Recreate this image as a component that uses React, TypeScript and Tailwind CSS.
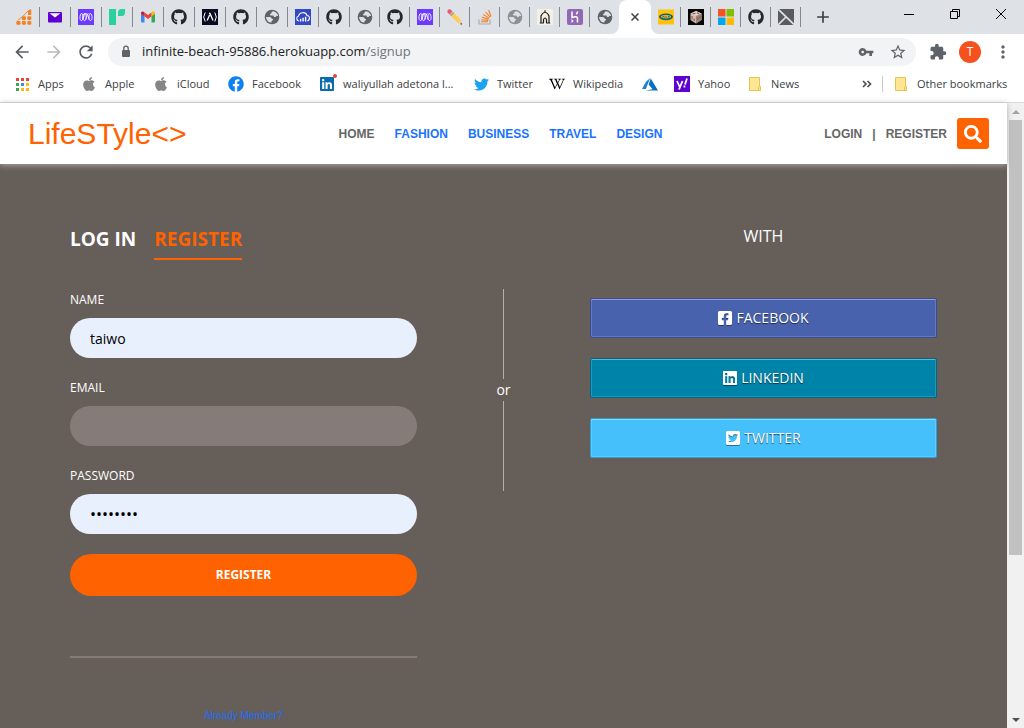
import React from "react";
import {
  FaApple,
  FaFacebook,
  FaFacebookSquare,
  FaGithub,
  FaLinkedin,
  FaSearch,
  FaTwitter,
  FaTwitterSquare,
  FaWikipediaW,
} from "react-icons/fa";
import {
  MdAdd,
  MdArrowBack,
  MdArrowForward,
  MdExtension,
  MdMoreVert,
  MdRefresh,
  MdStarBorder,
  MdVpnKey,
} from "react-icons/md";

type IconName =
  | "analytics" | "mail" | "meta" | "flag" | "gmail" | "github" | "camp" | "globe" | "cloud"
  | "pencil" | "stack" | "globeLight" | "arch" | "heroku" | "mtn" | "cube" | "windows" | "cross";

function Favicon({ name }: { name: IconName }) {
  if (name === "github") return <FaGithub className="size-4 text-[#24292e]" />;
  return (
    <svg viewBox="0 0 16 16" className="size-4 shrink-0" aria-hidden="true">
      {art[name]}
    </svg>
  );
}

function Globe({ color }: { color: string }) {
  return (
    <>
      <circle cx="8" cy="8" r="7.300" fill={color} />
      <path d="M9.300 2.200q-1.800.3-1.800 1.600 0 1-1.400 1.300-.5 1.400.7 1.500h2.400q.8.2.8 1.400h1.400q.9-.3.9-1.200l1.900.3Q13.700 3.700 9.300 2.200z" fill="#dee1e6" />
      <path d="M2 8h3.800q1.900.2 2 2h1.400q-.2 1.800-1.600 1.900v1.700Q2.700 13.500 2 8z" fill="#dee1e6" />
    </>
  );
}

const art: Partial<Record<IconName, React.ReactNode>> = {
  globe: <Globe color="#5f6368" />,
  globeLight: <Globe color="#8d9094" />,
  analytics: (
    <g fill="#f58220">
      <rect x="0.3" y="12" width="4.200" height="3.700" rx="1" />
      <rect x="5.900" y="12" width="4" height="3.700" rx="1" />
      <rect x="11.300" y="12" width="4" height="3.700" rx="1" />
      <rect x="5.900" y="7.200" width="4" height="3.700" rx="1" />
      <rect x="11.300" y="7.200" width="4" height="3.700" rx="1" />
      <path d="M12 6V1.500q1-1 3.200-1V6z" />
      <path d="M1.500 11.500Q7 8 12 2" fill="none" stroke="#f58220" strokeWidth=".9" />
    </g>
  ),
  mail: (
    <>
      <rect x="1" y="3" width="14" height="10.500" rx="1" fill="#5f01d1" />
      <path d="M2.500 4.200h11L8 8.500z" fill="#fff" />
    </>
  ),
  meta: (
    <>
      <rect width="16" height="16" fill="#6c3bff" />
      <path
        d="M4.800 10.500c.3-3 .2-6-1-6S1.700 7 2 9.500s2.200 2.800 3 .5S6.300 4.500 8 4.500s2.200 3.200 3 5.500 2.700 2 3-.5-.6-5-1.800-5-1.300 3-1 6M7.900 10.500c.4-2.500.3-6-1.200-6S4.500 7 5 9.500s2.400 2.800 3 .5 1-5.500 2.400-5.500"
        fill="none"
        stroke="#fff"
        strokeWidth=".9"
      />
    </>
  ),
  flag: (
    <>
      <path d="M0 0h7v16H0z" fill="#29d19c" />
      <path d="M9 7V3.500A3.500 3.500 0 0 1 12.500 0H16v3.500A3.500 3.500 0 0 1 12.500 7z" fill="#29d19c" />
    </>
  ),
  gmail: (
    <>
      <path d="M1 4v8.500q0 1 1 1h2.500V6.800z" fill="#4285f4" />
      <path d="M15 4v8.500q0 1-1 1h-2.500V6.800z" fill="#34a853" />
      <path d="M11.500 3.600V7.300L15 4.700V4c0-1.700-2-2.200-3-1z" fill="#fbbc04" />
      <path d="M4.500 3.500 8 6l3.500-2.500v3.800L8 10 4.500 7.300z" fill="#ea4335" />
      <path d="M1 4.700l3.500 2.600V3.500L4 3c-1.300-1-3-.5-3 1z" fill="#c5221f" />
    </>
  ),
  camp: (
    <>
      <rect width="16" height="16" fill="#0a0a23" />
      <path d="M3.200 3.500q-3 4.500 0 9M12.800 3.500q3 4.500 0 9" fill="none" stroke="#fff" strokeWidth="1" />
      <path d="M7 4.500h1l3 7M7.600 6 5.200 11.500" fill="none" stroke="#fff" strokeWidth="1.300" />
    </>
  ),
  cloud: (
    <>
      <rect width="16" height="16" fill="#3448c5" />
      <path d="M3.800 12a2.600 2.600 0 0 1-.3-5C4.500 2.800 10.800 2.500 12 6.500c3.200.3 3.200 4.800.3 5.500" fill="none" stroke="#fff" strokeWidth="1.100" />
      <path d="M4.900 12.500V9.800h1.400v2.700zM7.400 12.500V8.800h1.400v3.700zM9.900 12.500V7.800h1.400v4.700z" fill="#fff" />
    </>
  ),
  pencil: (
    <>
      <path d="M2.500 5.500 5.500 2.500 14 11l-3 3z" fill="#ffcc4d" />
      <path d="M3.600 6.600 6.600 3.600" stroke="#9aaab4" strokeWidth="1.800" />
      <path d="M.6 3.600Q0 1.500 1.500.5 3-.3 4.300 1.200L5.500 2.500l-3 3z" fill="#ea596e" />
      <path d="M14 11l1.800 4.800L11 14z" fill="#f3c99b" />
      <path d="m14.600 14 .4 1.800-2-.8z" fill="#292f33" />
    </>
  ),
  stack: (
    <>
      <path d="M2 10.500V15h11v-4.500" fill="none" stroke="#aab0b6" strokeWidth="1.200" />
      <path
        d="M4 12.800h7M4.200 10.800l7 .6M4.800 8.300l6.800 1.800M6.200 5.500l6 3.600M8.600 3l4.600 5.200M11.600 1l2.400 6.500"
        stroke="#f48024"
        strokeWidth="1.100"
      />
    </>
  ),
  arch: (
    <>
      <rect width="16" height="16" fill="#f3f1e4" />
      <path d="M4 14V7Q5 4 8 3q3 1 4 4v7M6.500 14v-3.500q1.500-3 3 0V14M2.800 14h4M9.200 14h4M8 1.200V3" fill="none" stroke="#1b1b1b" strokeWidth="1.200" />
    </>
  ),
  heroku: (
    <>
      <rect width="16" height="16" rx="2" fill="#9268b5" />
      <path d="M5 2.500v6q5.500-2 5.500 1V13.500M10.500 2.500q0 1.500-1.200 2.800" fill="none" stroke="#fff" strokeWidth="1.500" />
      <path d="M4.500 10v4L6.700 12z" fill="#fff" />
    </>
  ),
  mtn: (
    <>
      <rect y="0.500" width="16" height="15" fill="#ffc20e" />
      <ellipse cx="8" cy="7.800" rx="7" ry="3.400" fill="#0d5f83" />
      <ellipse cx="8" cy="7.800" rx="5" ry="1.700" fill="#ffc20e" />
      <path d="M4.500 8.800 5.500 7l1 1.600M8 7v2M9.800 8.800l1-1.800 1 1.600" fill="none" stroke="#0d5f83" strokeWidth=".9" />
    </>
  ),
  cube: (
    <>
      <rect width="16" height="16" fill="#050505" />
      <path d="M8 2 13.500 4.500v6.500L8 14.500 2.500 11V4.500z" fill="#c4bdb6" />
      <path d="m8 2 5.500 2.500L8 7 2.500 4.500z" fill="#d8d2cc" />
      <path d="M8 7v7.500l5.500-3.500V4.500z" fill="#8f8782" />
      <path d="M4.500 4.500h3M9 3.800l2 1M4 7v3.500M6.200 9.500V12M10 8.500V11M12 7v2.500" stroke="#b8452a" strokeWidth="1.100" />
    </>
  ),
  windows: (
    <>
      <path d="M0 0h7.500v7.500H0z" fill="#f35325" />
      <path d="M8.500 0H16v7.500H8.500z" fill="#81bc06" />
      <path d="M0 8.500h7.500V16H0z" fill="#05a6f0" />
      <path d="M8.500 8.500H16V16H8.500z" fill="#ffba08" />
    </>
  ),
  cross: (
    <>
      <rect width="16" height="16" fill="#595b5e" />
      <path d="M0 0 16 15.500M8 8 0 16" stroke="#dee1e6" strokeWidth="1.700" />
    </>
  ),
};

const wideTabs: IconName[] = ["analytics", "mail", "meta", "flag", "gmail", "github", "camp", "github", "globe", "cloud", "github"];
const narrowTabs: IconName[] = ["globe", "github", "meta", "pencil", "stack", "globeLight", "arch", "heroku", "globe"];
const trailingTabs: IconName[] = ["mtn", "cube", "windows", "github", "cross"];

function Tab({ name, wide, last }: { name: IconName; wide?: boolean; last?: boolean }) {
  return (
    <button
      type="button"
      aria-label={`${name} tab`}
      className={`flex h-5 items-center justify-center ${wide ? "w-[31px]" : "w-[30px]"} border-r ${last ? "border-transparent" : "border-[#85888d]"}`}
    >
      <Favicon name={name} />
    </button>
  );
}

function TabStrip() {
  return (
    <div className="flex h-[34px] items-center bg-[#dee1e6] pl-[9px]">
      {wideTabs.map((n, i) => (
        <Tab key={i} name={n} wide />
      ))}
      {narrowTabs.map((n, i) => (
        <Tab key={i} name={n} last={i === narrowTabs.length - 1} />
      ))}
      <div className="relative -ml-px flex h-full w-8 items-center justify-center rounded-t-lg bg-white">
        <svg viewBox="0 0 8 8" className="absolute -left-2 bottom-0 size-2" aria-hidden="true">
          <path d="M8 0v8H0a8 8 0 0 0 8-8z" fill="#fff" />
        </svg>
        <svg viewBox="0 0 8 8" className="absolute -right-2 bottom-0 size-2" aria-hidden="true">
          <path d="M0 0v8h8a8 8 0 0 1-8-8z" fill="#fff" />
        </svg>
        <button type="button" aria-label="Close tab">
          <svg viewBox="0 0 8 8" className="size-2" aria-hidden="true">
            <path d="m.5.5 7 7M7.500.5l-7 7" stroke="#3c4043" strokeWidth="1.500" />
          </svg>
        </button>
      </div>
      {trailingTabs.map((n, i) => (
        <Tab key={i} name={n} />
      ))}
      <button type="button" aria-label="New tab" className="ml-3 flex size-5 items-center justify-center">
        <MdAdd className="size-5 shrink-0 text-[#3c4043]" />
      </button>
      <div className="ml-auto flex h-7 w-[138px] items-center self-start text-black">
        <button type="button" aria-label="Minimize" className="flex flex-1 justify-center">
          <svg viewBox="0 0 10 10" className="size-2.5" aria-hidden="true"><path d="M0 5.500h10" stroke="currentColor" /></svg>
        </button>
        <button type="button" aria-label="Restore" className="flex flex-1 justify-center">
          <svg viewBox="0 0 10 10" className="size-2.5" aria-hidden="true">
            <path d="M.5 2.500h7v7h-7zM2.500 2.500v-2h7v7h-2" fill="none" stroke="currentColor" />
          </svg>
        </button>
        <button type="button" aria-label="Close" className="flex flex-1 justify-center">
          <svg viewBox="0 0 10 10" className="size-2.5" aria-hidden="true"><path d="m0 0 10 10M10 0 0 10" stroke="currentColor" /></svg>
        </button>
      </div>
    </div>
  );
}

function Toolbar() {
  return (
    <div className="flex h-9 items-center bg-white pr-[11px] pl-3">
      <div className="flex w-24 items-center gap-3 text-[#5a5e62]">
        <button type="button" aria-label="Back"><MdArrowBack className="size-5" /></button>
        <button type="button" aria-label="Forward" className="text-[#babcbe]"><MdArrowForward className="size-5" /></button>
        <button type="button" aria-label="Reload"><MdRefresh className="size-5" /></button>
      </div>
      <div className="flex h-7 flex-1 items-center rounded-full bg-[#f1f3f4] pr-[9px] pl-2.5 text-[#5f6368]">
        <svg viewBox="0 0 16 16" className="size-4" aria-hidden="true">
          <rect x="4" y="6" width="8" height="7" rx="1" fill="currentColor" />
          <path d="M5.800 6V4.300a2.200 2.200 0 0 1 4.400 0V6" fill="none" stroke="currentColor" strokeWidth="1.300" />
        </svg>
        <div className="ml-2 flex-1 text-[13px] text-[#202124]">
          infinite-beach-95886.herokuapp.com<span className="text-[#70757a]">/signup</span>
        </div>
        <button type="button" aria-label="Saved passwords"><MdVpnKey className="size-4" /></button>
        <button type="button" aria-label="Bookmark this page" className="ml-[15px]"><MdStarBorder className="size-[18px]" /></button>
      </div>
      <button type="button" aria-label="Extensions" className="ml-[13px] text-[#5f6368]"><MdExtension className="size-[18px]" /></button>
      <button type="button" aria-label="Profile" className="ml-3 flex size-[22px] items-center justify-center rounded-full bg-[#f4511e] text-xs text-white">
        T
      </button>
      <button type="button" aria-label="Menu" className="ml-3 text-[#5f6368]"><MdMoreVert className="size-5" /></button>
    </div>
  );
}

function Bookmark({ icon, label, width }: { icon: React.ReactNode; label: string; width: string }) {
  return (
    <a href="#" aria-label={label || "Azure"} className={`flex shrink-0 items-center gap-2 whitespace-nowrap ${width}`}>
      <span className="flex w-4 justify-center">{icon}</span>
      {label}
    </a>
  );
}

function FolderIcon() {
  return (
    <svg viewBox="0 0 16 16" className="size-4" aria-hidden="true">
      <path d="M2.500 1.500h10v9h1v4h-11z" fill="#ffe694" stroke="#e8c44f" />
      <path d="M11.500 14.500v-3q0-1 1-1h1v4z" fill="#ffe694" stroke="#e8c44f" />
    </svg>
  );
}

function BookmarksBar() {
  const dots = ["#ea4335", "#ea4335", "#ea4335", "#34a853", "#4285f4", "#fbbc04", "#34a853", "#fbbc04", "#fbbc04"];
  return (
    <div className="flex h-[33px] items-center border-b border-[#d9dadc] bg-white pr-3 pb-1 pl-[14px] text-[11px] text-[#3c4043]">
      <Bookmark
        width="w-[67px]"
        label="Apps"
        icon={
          <span className="grid grid-cols-3 gap-0.5">
            {dots.map((c, i) => (
              <span key={i} className="size-[3px]" style={{ background: c }} />
            ))}
          </span>
        }
      />
      <Bookmark width="w-[72px]" label="Apple" icon={<FaApple className="size-4 text-[#868686]" />} />
      <Bookmark width="w-[75px]" label="iCloud" icon={<FaApple className="size-4 text-[#868686]" />} />
      <Bookmark width="w-[91px]" label="Facebook" icon={<FaFacebook className="size-4 text-[#0d80f2]" />} />
      <Bookmark
        width="w-[154px]"
        label="waliyullah adetona l..."
        icon={
          <span className="relative">
            <FaLinkedin className="size-4 text-[#0a6cb0]" />
            <span className="absolute -top-0.5 -right-0.5 size-1 rounded-full bg-[#e8453c]" />
          </span>
        }
      />
      <Bookmark width="w-[76px]" label="Twitter" icon={<FaTwitter className="size-[15px] text-[#1da1f2]" />} />
      <Bookmark width="w-[93px]" label="Wikipedia" icon={<FaWikipediaW className="size-4 text-black" />} />
      <Bookmark
        width="w-[32px]"
        label=""
        icon={
          <svg viewBox="0 0 16 16" className="size-4" aria-hidden="true">
            <path d="M8.200 2 4 5.800 0 13h3.800z" fill="#1b7fd1" />
            <path d="M8.800 2.500 6.600 8.500l4 4.800L3.500 14.500H16z" fill="#0a6fc2" />
          </svg>
        }
      />
      <Bookmark
        width="w-[73px]"
        label="Yahoo"
        icon={
          <svg viewBox="0 0 16 16" className="size-4" aria-hidden="true">
            <rect width="16" height="16" fill="#5f01d1" />
            <path d="m3 5 2.500 5.500M8.500 5 5 13.500M13 2.500l-2 6M10.500 9.500v2" fill="none" stroke="#fff" strokeWidth="1.800" />
          </svg>
        }
      />
      <Bookmark width="w-[60px]" label="News" icon={<FolderIcon />} />
      <div className="ml-auto flex items-center">
        <button type="button" aria-label="More bookmarks" className="mr-2.5">
          <svg viewBox="0 0 10 8" className="h-2 w-2.5" aria-hidden="true">
            <path d="m1 1 3 3-3 3M5.500 1l3 3-3 3" fill="none" stroke="#4d5156" strokeWidth="1.700" />
          </svg>
        </button>
        <span className="mr-2.5 h-4 w-px bg-[#c6c8ca]" />
        <Bookmark width="w-[119px]" label="Other bookmarks" icon={<FolderIcon />} />
      </div>
    </div>
  );
}

function SiteHeader() {
  return (
    <header className="relative z-10 flex h-[61px] items-center justify-between bg-white pr-[18px] pl-7 font-['Liberation_Sans',Arial,sans-serif] text-xs font-bold text-[#666] shadow-[0_1px_6px_#b5acac]">
      <a href="#" className="w-[274px] text-[30px] leading-9 font-normal text-[#ff6200]">LifeSTyle&lt;&gt;</a>
      <nav className="flex gap-5 text-[#1a73ff]">
        <a href="#" className="text-[#666]">HOME</a>
        <a href="#">FASHION</a>
        <a href="#">BUSINESS</a>
        <a href="#">TRAVEL</a>
        <a href="#">DESIGN</a>
      </nav>
      <div className="flex w-[290px] items-center justify-end gap-2.5">
        <a href="#">LOGIN</a>
        <span>|</span>
        <a href="#">REGISTER</a>
        <button type="button" aria-label="Search" className="flex h-[31px] w-8 items-center justify-center rounded-[3px] bg-[#ff6200] text-white">
          <FaSearch className="size-[18px]" />
        </button>
      </div>
    </header>
  );
}

function Field({ id, label, type, value, filled }: { id: string; label: string; type: string; value: string; filled: boolean }) {
  return (
    <div className="mb-5">
      <label htmlFor={id} className="mb-2 block text-xs leading-5">{label}</label>
      <input
        id={id}
        type={type}
        defaultValue={value}
        className={`block h-10 w-full rounded-full px-5 ${type === "password" ? "text-base" : "text-sm"} text-black outline-none ${filled ? "bg-[#e8f0fe]" : "bg-[#857c79]"}`}
      />
    </div>
  );
}

const social = [
  { label: "FACEBOOK", Icon: FaFacebookSquare, tone: "bg-[#4862ad] border-[#374e97]" },
  { label: "LINKEDIN", Icon: FaLinkedin, tone: "bg-[#0083a8] border-[#006687]" },
  { label: "TWITTER", Icon: FaTwitterSquare, tone: "bg-[#46c0fb] border-[#2b9fdc]" },
];

function SignUp() {
  return (
    <main className="grid flex-1 grid-cols-[1fr_173px_1fr] bg-[#665e58] px-[70px] text-white">
      <form className="flex flex-col pt-[62px]" onSubmit={(e) => e.preventDefault()}>
        <div className="mb-[30px] flex gap-[18px] text-[19px] leading-[26px] font-bold">
          <a href="#" className="pb-2">LOG IN</a>
          <a href="#" className="border-b-2 border-[#ff6200] pb-1.5 text-[#ff6200]">REGISTER</a>
        </div>
        <Field id="name" label="NAME" type="text" value="taiwo" filled />
        <Field id="email" label="EMAIL" type="email" value="" filled={false} />
        <Field id="password" label="PASSWORD" type="password" value="lifestyl" filled />
        <button type="submit" className="h-[42px] w-full rounded-full bg-[#ff6200] text-xs font-bold">REGISTER</button>
        <hr className="mt-[60px] border-t-2 border-[#857c79]" />
        <a href="#" className="mt-[50px] self-center font-['Liberation_Sans',Arial,sans-serif] text-[10px] leading-4 text-[#1a6dff]">
          Already Member?
        </a>
      </form>
      <div className="flex flex-col items-center pt-[125px] text-sm leading-[22px]">
        <span className="h-[90px] w-px bg-[#b3aeab]" />
        or
        <span className="h-[90px] w-px bg-[#b3aeab]" />
      </div>
      <div className="flex flex-col gap-5 pt-[60px]">
        <h2 className="mb-[30px] text-center text-base leading-6">WITH</h2>
        {social.map(({ label, Icon, tone }) => (
          <button
            key={label}
            type="button"
            className={`flex h-10 items-center justify-center gap-1 rounded-[2px] border text-sm shadow-[inset_0_1px_0_rgba(255,255,255,0.3),inset_0_0_0_1px_rgba(255,255,255,0.15)] text-shadow-[0_1px_1px_rgba(0,0,0,0.6)] ${tone}`}
          >
            <Icon className="h-4 w-3.5 drop-shadow-[0_1px_0_rgba(0,0,0,0.4)]" />
            {label}
          </button>
        ))}
      </div>
    </main>
  );
}

function ScrollBar() {
  return (
    <div className="flex w-[17px] flex-col items-center bg-[#f1f1f1]" aria-hidden="true">
      <span className="flex h-[17px] items-center">
        <svg viewBox="0 0 8 4" className="h-1 w-2"><path d="M0 4h8L4 0z" fill="#a3a3a3" /></svg>
      </span>
      <span className="w-[13px] flex-[435] bg-[#c1c1c1]" />
      <span className="flex-[156]" />
      <span className="flex h-[17px] items-center">
        <svg viewBox="0 0 8 4" className="h-1 w-2"><path d="M0 0h8L4 4z" fill="#505050" /></svg>
      </span>
    </div>
  );
}

export default function App() {
  return (
    <div className="flex min-h-screen flex-col bg-white font-['Open_Sans','Noto_Sans',sans-serif]">
      <TabStrip />
      <Toolbar />
      <BookmarksBar />
      <div className="flex flex-1">
        <div className="flex min-w-0 flex-1 flex-col">
          <SiteHeader />
          <SignUp />
        </div>
        <ScrollBar />
      </div>
    </div>
  );
}
